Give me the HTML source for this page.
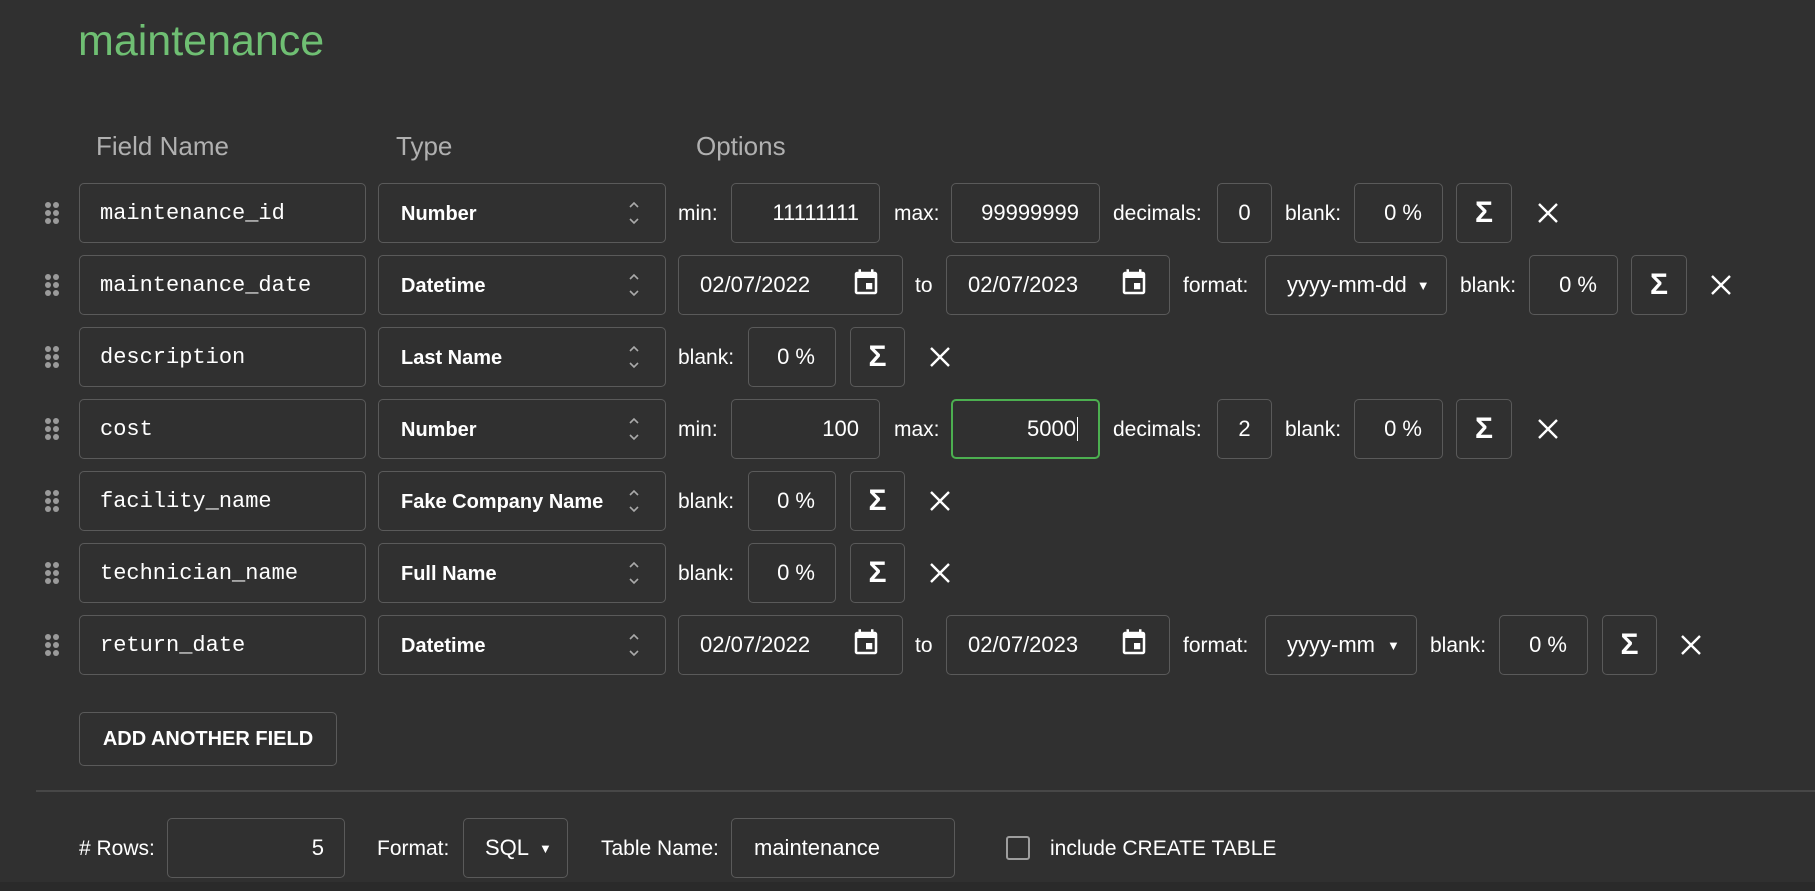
<!DOCTYPE html>
<html><head><meta charset="utf-8"><style>
*{box-sizing:border-box;margin:0;padding:0}
body{width:1815px;height:891px;background:#303030;font-family:"Liberation Sans",Arial,sans-serif;color:#fff;position:relative;overflow:hidden}
.a{position:absolute}
.b{position:absolute;height:60px;border:1px solid #5a5a5a;border-radius:5px;display:flex;align-items:center;font-size:22px;color:#fff}
.r{justify-content:flex-end;padding-right:20px}
.c{justify-content:center}
.l{position:absolute;height:60px;line-height:62px;font-size:21px;color:#fff}
.m{font-family:"Liberation Mono","DejaVu Sans Mono",monospace;font-size:22px;padding-left:20px}
.t{font-weight:bold;font-size:20px;padding-left:22px;padding-top:2px}
.h{position:absolute;top:131px;font-size:26px;color:#b0b0b0}
.sg{font-size:30px;font-weight:bold;justify-content:center}
.x{position:absolute;width:22px;height:22px}
.dr{position:absolute;width:14px;height:22px}
.dr i{position:absolute;width:6px;height:6px;border-radius:3px;background:#9a9a9a}
.cal{position:absolute;width:30px;height:30px}
.ud{position:absolute;width:14px;height:30px}
</style></head><body>
<div class="a" style="left:78px;top:17px;font-size:43px;color:#6fbf73;font-weight:300">maintenance</div>
<div class="h" style="left:96px">Field Name</div>
<div class="h" style="left:396px">Type</div>
<div class="h" style="left:696px">Options</div>

<!-- ROW 1 -->
<div class="dr" style="left:45px;top:202px"><i style="left:0;top:0"></i><i style="left:8px;top:0"></i><i style="left:0;top:8px"></i><i style="left:8px;top:8px"></i><i style="left:0;top:16px"></i><i style="left:8px;top:16px"></i></div>
<div class="b m" style="left:79px;top:183px;width:287px">maintenance_id</div>
<div class="b t" style="left:378px;top:183px;width:288px">Number</div>
<svg class="ud" style="left:627px;top:198px" viewBox="0 0 14 30"><path d="M3 9l4-4 4 4M3 21l4 4 4-4" stroke="#aaa" stroke-width="1.6" fill="none"/></svg>
<span class="l" style="left:678px;top:183px">min:</span>
<div class="b r" style="left:731px;top:183px;width:149px">11111111</div>
<span class="l" style="left:894px;top:183px">max:</span>
<div class="b r" style="left:951px;top:183px;width:149px">99999999</div>
<span class="l" style="left:1113px;top:183px">decimals:</span>
<div class="b c" style="left:1217px;top:183px;width:55px">0</div>
<span class="l" style="left:1285px;top:183px">blank:</span>
<div class="b r" style="left:1354px;top:183px;width:89px">0 %</div>
<div class="b sg" style="left:1456px;top:183px;width:56px">Σ</div>
<svg class="x" style="left:1537px;top:202px" viewBox="0 0 22 22"><path d="M2 2L20 20M20 2L2 20" stroke="#fff" stroke-width="2.4"/></svg>

<!-- ROW 2 -->
<div class="dr" style="left:45px;top:274px"><i style="left:0;top:0"></i><i style="left:8px;top:0"></i><i style="left:0;top:8px"></i><i style="left:8px;top:8px"></i><i style="left:0;top:16px"></i><i style="left:8px;top:16px"></i></div>
<div class="b m" style="left:79px;top:255px;width:287px">maintenance_date</div>
<div class="b t" style="left:378px;top:255px;width:288px">Datetime</div>
<svg class="ud" style="left:627px;top:270px" viewBox="0 0 14 30"><path d="M3 9l4-4 4 4M3 21l4 4 4-4" stroke="#aaa" stroke-width="1.6" fill="none"/></svg>
<div class="b" style="left:678px;top:255px;width:225px;padding-left:21px">02/07/2022</div>
<svg class="cal" style="left:851px;top:268px" viewBox="0 0 24 24"><path fill="#fff" d="M17 12h-5v5h5v-5zM16 1v2H8V1H6v2H5c-1.11 0-1.99.9-1.99 2L3 19c0 1.1.89 2 2 2h14c1.1 0 2-.9 2-2V5c0-1.1-.9-2-2-2h-1V1h-2zm3 18H5V8h14v11z"/></svg>
<span class="l" style="left:915px;top:255px">to</span>
<div class="b" style="left:946px;top:255px;width:224px;padding-left:21px">02/07/2023</div>
<svg class="cal" style="left:1119px;top:268px" viewBox="0 0 24 24"><path fill="#fff" d="M17 12h-5v5h5v-5zM16 1v2H8V1H6v2H5c-1.11 0-1.99.9-1.99 2L3 19c0 1.1.89 2 2 2h14c1.1 0 2-.9 2-2V5c0-1.1-.9-2-2-2h-1V1h-2zm3 18H5V8h14v11z"/></svg>
<span class="l" style="left:1183px;top:255px">format:</span>
<div class="b" style="left:1265px;top:255px;width:182px;padding-left:21px">yyyy-mm-dd<span style="font-size:13px;margin-left:10px">▼</span></div>
<span class="l" style="left:1460px;top:255px">blank:</span>
<div class="b r" style="left:1529px;top:255px;width:89px">0 %</div>
<div class="b sg" style="left:1631px;top:255px;width:56px">Σ</div>
<svg class="x" style="left:1710px;top:274px" viewBox="0 0 22 22"><path d="M2 2L20 20M20 2L2 20" stroke="#fff" stroke-width="2.4"/></svg>

<!-- ROW 3 -->
<div class="dr" style="left:45px;top:346px"><i style="left:0;top:0"></i><i style="left:8px;top:0"></i><i style="left:0;top:8px"></i><i style="left:8px;top:8px"></i><i style="left:0;top:16px"></i><i style="left:8px;top:16px"></i></div>
<div class="b m" style="left:79px;top:327px;width:287px">description</div>
<div class="b t" style="left:378px;top:327px;width:288px">Last Name</div>
<svg class="ud" style="left:627px;top:342px" viewBox="0 0 14 30"><path d="M3 9l4-4 4 4M3 21l4 4 4-4" stroke="#aaa" stroke-width="1.6" fill="none"/></svg>
<span class="l" style="left:678px;top:327px">blank:</span>
<div class="b r" style="left:748px;top:327px;width:88px">0 %</div>
<div class="b sg" style="left:850px;top:327px;width:55px">Σ</div>
<svg class="x" style="left:929px;top:346px" viewBox="0 0 22 22"><path d="M2 2L20 20M20 2L2 20" stroke="#fff" stroke-width="2.4"/></svg>

<!-- ROW 4 -->
<div class="dr" style="left:45px;top:418px"><i style="left:0;top:0"></i><i style="left:8px;top:0"></i><i style="left:0;top:8px"></i><i style="left:8px;top:8px"></i><i style="left:0;top:16px"></i><i style="left:8px;top:16px"></i></div>
<div class="b m" style="left:79px;top:399px;width:287px">cost</div>
<div class="b t" style="left:378px;top:399px;width:288px">Number</div>
<svg class="ud" style="left:627px;top:414px" viewBox="0 0 14 30"><path d="M3 9l4-4 4 4M3 21l4 4 4-4" stroke="#aaa" stroke-width="1.6" fill="none"/></svg>
<span class="l" style="left:678px;top:399px">min:</span>
<div class="b r" style="left:731px;top:399px;width:149px">100</div>
<span class="l" style="left:894px;top:399px">max:</span>
<div class="b r" style="left:951px;top:399px;width:149px;border:2px solid #4caf50">5000<span style="display:inline-block;width:1px;height:24px;background:#fff;margin-left:1px"></span></div>
<span class="l" style="left:1113px;top:399px">decimals:</span>
<div class="b c" style="left:1217px;top:399px;width:55px">2</div>
<span class="l" style="left:1285px;top:399px">blank:</span>
<div class="b r" style="left:1354px;top:399px;width:89px">0 %</div>
<div class="b sg" style="left:1456px;top:399px;width:56px">Σ</div>
<svg class="x" style="left:1537px;top:418px" viewBox="0 0 22 22"><path d="M2 2L20 20M20 2L2 20" stroke="#fff" stroke-width="2.4"/></svg>

<!-- ROW 5 -->
<div class="dr" style="left:45px;top:490px"><i style="left:0;top:0"></i><i style="left:8px;top:0"></i><i style="left:0;top:8px"></i><i style="left:8px;top:8px"></i><i style="left:0;top:16px"></i><i style="left:8px;top:16px"></i></div>
<div class="b m" style="left:79px;top:471px;width:287px">facility_name</div>
<div class="b t" style="left:378px;top:471px;width:288px">Fake Company Name</div>
<svg class="ud" style="left:627px;top:486px" viewBox="0 0 14 30"><path d="M3 9l4-4 4 4M3 21l4 4 4-4" stroke="#aaa" stroke-width="1.6" fill="none"/></svg>
<span class="l" style="left:678px;top:471px">blank:</span>
<div class="b r" style="left:748px;top:471px;width:88px">0 %</div>
<div class="b sg" style="left:850px;top:471px;width:55px">Σ</div>
<svg class="x" style="left:929px;top:490px" viewBox="0 0 22 22"><path d="M2 2L20 20M20 2L2 20" stroke="#fff" stroke-width="2.4"/></svg>

<!-- ROW 6 -->
<div class="dr" style="left:45px;top:562px"><i style="left:0;top:0"></i><i style="left:8px;top:0"></i><i style="left:0;top:8px"></i><i style="left:8px;top:8px"></i><i style="left:0;top:16px"></i><i style="left:8px;top:16px"></i></div>
<div class="b m" style="left:79px;top:543px;width:287px">technician_name</div>
<div class="b t" style="left:378px;top:543px;width:288px">Full Name</div>
<svg class="ud" style="left:627px;top:558px" viewBox="0 0 14 30"><path d="M3 9l4-4 4 4M3 21l4 4 4-4" stroke="#aaa" stroke-width="1.6" fill="none"/></svg>
<span class="l" style="left:678px;top:543px">blank:</span>
<div class="b r" style="left:748px;top:543px;width:88px">0 %</div>
<div class="b sg" style="left:850px;top:543px;width:55px">Σ</div>
<svg class="x" style="left:929px;top:562px" viewBox="0 0 22 22"><path d="M2 2L20 20M20 2L2 20" stroke="#fff" stroke-width="2.4"/></svg>

<!-- ROW 7 -->
<div class="dr" style="left:45px;top:634px"><i style="left:0;top:0"></i><i style="left:8px;top:0"></i><i style="left:0;top:8px"></i><i style="left:8px;top:8px"></i><i style="left:0;top:16px"></i><i style="left:8px;top:16px"></i></div>
<div class="b m" style="left:79px;top:615px;width:287px">return_date</div>
<div class="b t" style="left:378px;top:615px;width:288px">Datetime</div>
<svg class="ud" style="left:627px;top:630px" viewBox="0 0 14 30"><path d="M3 9l4-4 4 4M3 21l4 4 4-4" stroke="#aaa" stroke-width="1.6" fill="none"/></svg>
<div class="b" style="left:678px;top:615px;width:225px;padding-left:21px">02/07/2022</div>
<svg class="cal" style="left:851px;top:628px" viewBox="0 0 24 24"><path fill="#fff" d="M17 12h-5v5h5v-5zM16 1v2H8V1H6v2H5c-1.11 0-1.99.9-1.99 2L3 19c0 1.1.89 2 2 2h14c1.1 0 2-.9 2-2V5c0-1.1-.9-2-2-2h-1V1h-2zm3 18H5V8h14v11z"/></svg>
<span class="l" style="left:915px;top:615px">to</span>
<div class="b" style="left:946px;top:615px;width:224px;padding-left:21px">02/07/2023</div>
<svg class="cal" style="left:1119px;top:628px" viewBox="0 0 24 24"><path fill="#fff" d="M17 12h-5v5h5v-5zM16 1v2H8V1H6v2H5c-1.11 0-1.99.9-1.99 2L3 19c0 1.1.89 2 2 2h14c1.1 0 2-.9 2-2V5c0-1.1-.9-2-2-2h-1V1h-2zm3 18H5V8h14v11z"/></svg>
<span class="l" style="left:1183px;top:615px">format:</span>
<div class="b" style="left:1265px;top:615px;width:152px;padding-left:21px">yyyy-mm<span style="font-size:13px;margin-left:12px">▼</span></div>
<span class="l" style="left:1430px;top:615px">blank:</span>
<div class="b r" style="left:1499px;top:615px;width:89px">0 %</div>
<div class="b sg" style="left:1602px;top:615px;width:55px">Σ</div>
<svg class="x" style="left:1680px;top:634px" viewBox="0 0 22 22"><path d="M2 2L20 20M20 2L2 20" stroke="#fff" stroke-width="2.4"/></svg>

<!-- Add button -->
<div class="b c" style="left:79px;top:712px;width:258px;height:54px;font-weight:bold;font-size:20px">ADD ANOTHER FIELD</div>

<div class="a" style="left:36px;top:790px;width:1779px;height:2px;background:#474747"></div>

<!-- Bottom -->
<span class="l" style="left:79px;top:818px">#&nbsp;Rows:</span>
<div class="b r" style="left:167px;top:818px;width:178px">5</div>
<span class="l" style="left:377px;top:818px">Format:</span>
<div class="b" style="left:463px;top:818px;width:105px;padding-left:21px">SQL<span style="font-size:13px;margin-left:10px">▼</span></div>
<span class="l" style="left:601px;top:818px">Table Name:</span>
<div class="b" style="left:731px;top:818px;width:224px;padding-left:22px">maintenance</div>
<div class="a" style="left:1006px;top:836px;width:24px;height:24px;border:2px solid #9e9e9e;border-radius:3px"></div>
<span class="l" style="left:1050px;top:818px">include CREATE TABLE</span>
<div class="a" style="left:0;top:882px;width:1815px;height:9px;background:#2a2a2a"></div>
</body></html>
